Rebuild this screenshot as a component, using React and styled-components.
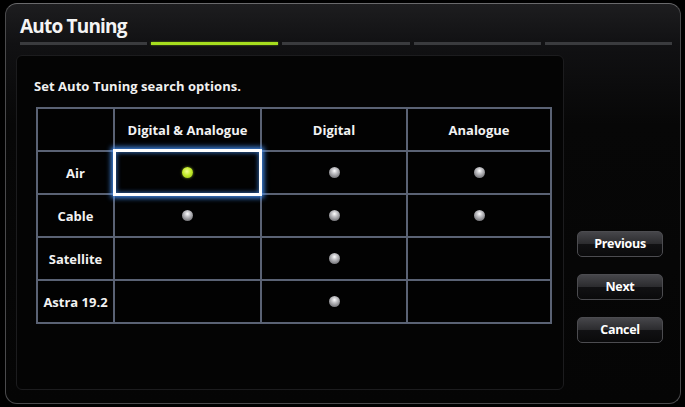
import React from 'react';
import styled, { createGlobalStyle } from 'styled-components';

const GlobalStyle = createGlobalStyle`
  html, body {
    margin: 0;
    padding: 0;
    background: #000;
  }
  body {
    font-family: "Open Sans", "Liberation Sans", sans-serif;
    color: #fff;
  }
`;

const Screen = styled.div`
  width: 685px;
  height: 407px;
  box-sizing: border-box;
  padding: 3px 4px 3px 5px;
  background: #000;
  overflow: hidden;
`;

const Panel = styled.div`
  height: 100%;
  box-sizing: border-box;
  border: 1px solid #4a4a4c;
  border-top-color: #6a6a6c;
  border-radius: 12px;
  background: linear-gradient(to bottom, #1d1d1f 0px, #111113 40px, #070707 120px, #050505 100%);
  padding: 0 8px 0 11px;
  display: flex;
  flex-direction: column;
`;

const Title = styled.h1`
  margin: 10px 0 0 3px;
  font-size: 19px;
  line-height: 24px;
  font-weight: 700;
  letter-spacing: -0.8px;
  color: #f4f4f4;
`;

const Steps = styled.div`
  display: flex;
  gap: 4px;
  margin: 4px 0 0 3px;
`;

const Step = styled.div`
  flex: 1;
  height: 3px;
  background: ${p => (p.$active ? '#a6de1e' : '#3a3b3e')};
  box-shadow: ${p => (p.$active ? '0 0 2px rgba(170,230,40,0.6)' : 'none')};
`;

const Body = styled.div`
  display: flex;
  margin-top: 10px;
`;

const Content = styled.div`
  width: 548px;
  height: 335px;
  box-sizing: border-box;
  margin-left: -1px;
  border: 1px solid #1c1c1e;
  border-radius: 6px;
  background: #040404;
  padding: 21px 0 0 17px;
`;

const Instruction = styled.p`
  margin: 0;
  font-size: 13px;
  line-height: 18px;
  font-weight: 700;
  letter-spacing: 0.05px;
  color: #f0f0f0;
`;

const Grid = styled.div`
  display: grid;
  grid-template-columns: 75px 145px 144px 142px;
  grid-auto-rows: 41px;
  gap: 2px;
  padding: 2px;
  width: max-content;
  margin: 12px 0 0 2px;
  background: #5a6274;
`;

const Cell = styled.div`
  position: relative;
  background: #020202;
  display: flex;
  align-items: center;
  justify-content: center;
  font-size: 13px;
  font-weight: 700;
  color: #f2f2f2;

  ${p => p.$selected && `
    z-index: 1;
    &::after {
      content: '';
      position: absolute;
      inset: -3px -2px -3px -2px;
      border: 3px solid #ffffff;
      box-shadow: 0 0 5px 2px rgba(70,150,255,0.9), inset 0 0 4px 1px rgba(70,150,255,0.6);
      pointer-events: none;
    }
  `}
`;

const Dot = styled.span`
  width: 11px;
  height: 11px;
  border-radius: 50%;
  background: ${p =>
    p.$on
      ? 'radial-gradient(circle at 45% 40%, #f0ff90 0%, #c4ec2c 45%, #8bb812 100%)'
      : 'radial-gradient(circle at 50% 35%, #ffffff 0%, #c4c4c8 30%, #8a8a8e 65%, #555558 100%)'};
  box-shadow: ${p => (p.$on ? '0 0 3px rgba(200,240,60,0.6)' : '0 1px 1px rgba(0,0,0,0.6)')};
`;

const Side = styled.div`
  display: flex;
  flex-direction: column;
  gap: 17px;
  margin: 176px 0 0 13px;
`;

const Button = styled.button`
  width: 86px;
  height: 26px;
  padding: 0;
  border: 1px solid #4c4c50;
  border-radius: 5px;
  background: linear-gradient(to bottom, #46464a 0%, #2c2c2f 48%, #111113 52%, #0a0a0b 100%);
  color: #fff;
  font-family: "Open Sans", "Liberation Sans", sans-serif;
  font-size: 12.5px;
  font-weight: 700;
  letter-spacing: -0.3px;
  line-height: 24px;
  text-align: center;
`;

const columns = ['Digital & Analogue', 'Digital', 'Analogue'];

const rows = [
  { name: 'Air', cells: ['on', 'dot', 'dot'] },
  { name: 'Cable', cells: ['dot', 'dot', 'dot'] },
  { name: 'Satellite', cells: [null, 'dot', null] },
  { name: 'Astra 19.2', cells: [null, 'dot', null] },
];

export default function App() {
  return (
    <>
      <GlobalStyle />
      <Screen>
        <Panel>
          <Title>Auto Tuning</Title>
          <Steps>
            {[0, 1, 2, 3, 4].map(i => <Step key={i} $active={i === 1} />)}
          </Steps>
          <Body>
            <Content>
              <Instruction>Set Auto Tuning search options.</Instruction>
              <Grid>
                <Cell />
                {columns.map(c => <Cell key={c}>{c}</Cell>)}
                {rows.map(r => (
                  <React.Fragment key={r.name}>
                    <Cell>{r.name}</Cell>
                    {r.cells.map((v, i) => (
                      <Cell key={i} $selected={v === 'on'}>
                        {v && <Dot $on={v === 'on'} />}
                      </Cell>
                    ))}
                  </React.Fragment>
                ))}
              </Grid>
            </Content>
            <Side>
              <Button>Previous</Button>
              <Button>Next</Button>
              <Button>Cancel</Button>
            </Side>
          </Body>
        </Panel>
      </Screen>
    </>
  );
}
